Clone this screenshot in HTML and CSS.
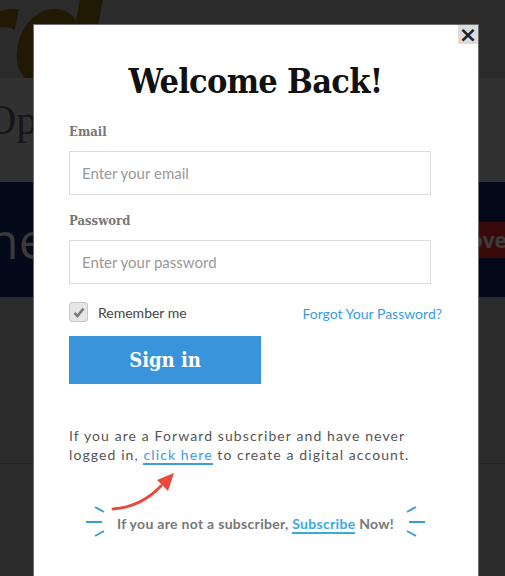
FILE: index.html
```html
<!DOCTYPE html>
<html lang="en">
<head>
    <meta charset="UTF-8">
    <meta name="viewport" content="width=device-width, initial-scale=1.0">
    <title>Forward | Login</title>
    <link rel="stylesheet" href="styles.css">
</head>
<body>
    <div class="site">
        <header class="masthead">
            <span class="logo">rd</span>
        </header>
        <div class="section-title">
            <h1>Opinion</h1>
        </div>
        <div class="banner">
            <span class="banner-text">ne</span>
            <span class="love">Love</span>
        </div>
        <div class="content"></div>
    </div>

    <div class="modal">
        <button class="close" type="button">&times;</button>
        <h2>Welcome Back!</h2>
        <form class="login-form">
            <div class="form-group">
                <label for="email">Email</label>
                <input type="email" id="email" placeholder="Enter your email">
            </div>
            <div class="form-group">
                <label for="password">Password</label>
                <input type="password" id="password" placeholder="Enter your password">
            </div>
            <div class="form-row">
                <label class="remember">
                    <span class="checkbox">
                        <svg width="12" height="11" viewBox="0 0 12 11"><path d="M1.5 6 L4.5 9 L10.5 1.5" fill="none" stroke="#7a7a7a" stroke-width="2.6"/></svg>
                    </span>
                    Remember me
                </label>
                <a href="#" class="forgot">Forgot Your Password?</a>
            </div>
            <button type="button" class="signin">Sign in</button>
        </form>
        <p class="note">If you are a Forward subscriber and have never logged in, <a href="#">click here</a> to create a digital account.</p>
        <svg class="arrow" width="373" height="40" viewBox="0 0 373 40">
            <path d="M44 39 Q72 37 92 16" fill="none" stroke="#e8493c" stroke-width="3" stroke-linecap="round"/>
            <polygon points="105,3 88,10 99,21" fill="#e8493c"/>
        </svg>
        <div class="subscribe">
            <svg class="spark" width="22" height="34" viewBox="0 0 22 34">
                <path d="M10 1 L19 6 M1 16 L17 16 M10 30 L19 25" stroke="#3a9ad9" stroke-width="2"/>
            </svg>
            <span class="subscribe-text">If you are not a subscriber, <a href="#">Subscribe</a> Now!</span>
            <svg class="spark" width="22" height="34" viewBox="0 0 22 34">
                <path d="M12 1 L3 6 M5 16 L21 16 M12 30 L3 25" stroke="#3a9ad9" stroke-width="2"/>
            </svg>
        </div>
    </div>
</body>
</html>
```

FILE: styles.css
```css
:root {
    --theme-blue: #3994db;
    --theme-link: #3b9ce0;
    --theme-text: #555;
    --theme-label: #777;
    --slab: "DejaVu Serif", serif;
    --sans: Lato, "Open Sans", sans-serif;
}

body {
    margin: 0;
    background-color: #2b2b2b;
    font-family: var(--sans);
    overflow: hidden;
    height: 576px;
}

/* page behind the overlay, already dimmed */
.site {
    display: flex;
    flex-direction: column;
}

.masthead {
    height: 78px;
    overflow: hidden;
}

.logo {
    display: block;
    margin-left: -52px;
    margin-top: -28px;
    font-family: "DejaVu Sans", sans-serif;
    font-weight: bold;
    font-style: italic;
    font-size: 130px;
    line-height: 1;
    color: #221904;
}

.section-title {
    height: 104px;
    background-color: #313131;
    overflow: hidden;
}

.section-title h1 {
    margin: 18px 0 0 -14px;
    font-family: "Liberation Serif", serif;
    font-weight: normal;
    font-size: 42px;
    color: #161616;
}

.banner {
    height: 115px;
    background-color: #050a1b;
    display: flex;
    align-items: center;
    justify-content: space-between;
    overflow: hidden;
}

.banner-text {
    margin-left: -12px;
    font-size: 50px;
    color: #3a3a3a;
    font-family: "Open Sans", sans-serif;
}

.love {
    margin-right: -12px;
    padding: 4px 10px;
    background-color: #3a0909;
    color: #3c3c3c;
    font-size: 21px;
    font-weight: bold;
    font-family: "Open Sans", sans-serif;
}

.content {
    height: 166px;
    border-bottom: 1px solid #232323;
}

/* login modal */
.modal {
    position: absolute;
    left: 33px;
    top: 24px;
    width: 373px;
    height: 560px;
    padding: 0 36px 0 35px;
    background-color: #fff;
    border: 1px solid #6e6e6e;
    box-sizing: content-box;
}

.close {
    position: absolute;
    top: 0;
    right: 0;
    width: 20px;
    height: 19px;
    padding: 0;
    border: none;
    background-color: #dcdcdc;
    color: #222;
    font-family: "DejaVu Sans", sans-serif;
    font-size: 22px;
    font-weight: bold;
    line-height: 19px;
    cursor: pointer;
}

h2 {
    margin: 36px 0 0;
    text-align: center;
    font-family: var(--slab);
    font-stretch: condensed;
    font-size: 34px;
    line-height: 40px;
    letter-spacing: -0.7px;
    color: #111;
}

.login-form {
    margin-top: 23px;
    display: flex;
    flex-direction: column;
}

.form-group {
    display: flex;
    flex-direction: column;
    margin-bottom: 18px;
}

.form-group label {
    font-family: var(--slab);
    font-stretch: condensed;
    font-weight: bold;
    font-size: 13px;
    line-height: 16px;
    color: var(--theme-label);
    margin-bottom: 11px;
}

.form-group input {
    width: 362px;
    height: 44px;
    box-sizing: border-box;
    padding: 0 12px;
    border: 1px solid #ddd;
    font-family: var(--sans);
    font-size: 15px;
    color: #333;
}

.form-group input::placeholder {
    color: #999;
}

.form-row {
    display: flex;
    justify-content: space-between;
    align-items: flex-start;
}

.remember {
    display: flex;
    align-items: center;
    gap: 10px;
    font-size: 14px;
    color: #444;
}

.checkbox {
    width: 17px;
    height: 18px;
    border: 1px solid #c8c8c8;
    border-radius: 3px;
    background-color: #e6e6e6;
    display: flex;
    align-items: center;
    justify-content: center;
}

.forgot {
    margin-top: 3px;
    font-size: 14px;
    color: var(--theme-link);
    text-decoration: none;
}

.signin {
    margin-top: 14px;
    width: 192px;
    height: 48px;
    border: none;
    background-color: var(--theme-blue);
    color: #fff;
    font-family: var(--slab);
    font-stretch: condensed;
    font-weight: bold;
    font-size: 20px;
    cursor: pointer;
}

.note {
    margin: 42px 0 0;
    font-size: 14px;
    line-height: 19px;
    letter-spacing: 1.1px;
    color: var(--theme-text);
}

.note a {
    color: var(--theme-link);
    text-decoration: none;
    border-bottom: 2px solid var(--theme-link);
}

.arrow {
    display: block;
    margin-top: 6px;
    overflow: visible;
}

.subscribe {
    display: flex;
    align-items: center;
    justify-content: center;
    gap: 10px;
    margin-top: -4px;
}

.subscribe-text {
    font-size: 14px;
    font-weight: bold;
    letter-spacing: 0.3px;
    color: var(--theme-label);
}

.subscribe-text a {
    color: #3aa9e0;
    text-decoration: none;
    border-bottom: 2px solid #3aa9e0;
}
```
